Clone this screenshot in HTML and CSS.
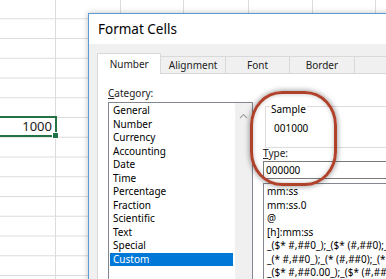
FILE: index.html
```html
<!DOCTYPE html>
<html lang="en">
<head>
    <meta charset="UTF-8">
    <meta name="viewport" content="width=device-width, initial-scale=1.0">
    <title>Format Cells</title>
    <link rel="stylesheet" href="styles.css">
</head>
<body>
    <div class="sheet">
        <div class="col col-a">
            <div class="cell selected">1000<span class="handle"></span></div>
        </div>
        <div class="col col-b"></div>
        <div class="col col-c"></div>
        <div class="col col-d"></div>
        <div class="col col-e"></div>
        <div class="col col-f"></div>
    </div>

    <div class="dialog">
        <div class="titlebar">Format Cells</div>
        <div class="dialog-body">
            <div class="tabs">
                <div class="tab active">Number</div>
                <div class="tab">Alignment</div>
                <div class="tab">Font</div>
                <div class="tab">Border</div>
                <div class="tab"></div>
            </div>
            <div class="panel">
                <div class="col-left">
                    <div class="label"><u>C</u>ategory:</div>
                    <div class="listbox category-list">
                        <div class="items">
                            <div class="item">General</div>
                            <div class="item">Number</div>
                            <div class="item">Currency</div>
                            <div class="item">Accounting</div>
                            <div class="item">Date</div>
                            <div class="item">Time</div>
                            <div class="item">Percentage</div>
                            <div class="item">Fraction</div>
                            <div class="item">Scientific</div>
                            <div class="item">Text</div>
                            <div class="item">Special</div>
                            <div class="item selected">Custom</div>
                        </div>
                        <div class="scrollbar">
                            <svg width="9" height="6" viewBox="0 0 9 6"><path d="M1 5 L4.5 1.5 L8 5" fill="none" stroke="#a6a6a6" stroke-width="1.2"/></svg>
                        </div>
                    </div>
                </div>
                <div class="col-right">
                    <fieldset class="groupbox">
                        <legend>Sample</legend>
                        <div class="sample-value">001000</div>
                    </fieldset>
                    <div class="label type-label"><u>T</u>ype:</div>
                    <div class="textbox">000000</div>
                    <div class="listbox type-list">
                        <div class="item">mm:ss</div>
                        <div class="item">mm:ss.0</div>
                        <div class="item">@</div>
                        <div class="item">[h]:mm:ss</div>
                        <div class="item">_($* #,##0_);_($* (#,##0);_($* "-"_);_(@_)</div>
                        <div class="item">_(* #,##0_);_(* (#,##0);_(* "-"_);_(@_)</div>
                        <div class="item">_($* #,##0.00_);_($* (#,##0.00);_($* "-"??_);_(@_)</div>
                    </div>
                </div>
            </div>
        </div>
    </div>

    <div class="callout"></div>
</body>
</html>
```

FILE: styles.css
```css
body {
    margin: 0;
    width: 386px;
    height: 279px;
    overflow: hidden;
    position: relative;
    background-color: #fff;
    font-family: "Noto Sans", sans-serif;
    font-size: 10px;
    color: #000;
}

/* spreadsheet behind the dialog */
.sheet {
    display: flex;
    height: 279px;
    background-image: linear-gradient(to bottom, #dcdcdc 0, #dcdcdc 1px, transparent 1px);
    background-size: 100% 19.75px;
    background-position: 0 117px;
}

.col {
    border-right: 1px solid #dcdcdc;
    flex: none;
}

.col-a { width: 55px; }
.col-b { width: 64px; }
.col-c { width: 62px; }
.col-d { width: 64px; }
.col-e { width: 63px; }
.col-f { width: 62px; }

.cell.selected {
    position: relative;
    box-sizing: border-box;
    margin: 116px 0 0 -2px;
    width: 59px;
    height: 21px;
    border: 2px solid #217346;
    padding-right: 3px;
    text-align: right;
    font-size: 13px;
    line-height: 17px;
    color: #222;
}

.handle {
    position: absolute;
    right: -4px;
    bottom: -4px;
    width: 5px;
    height: 5px;
    background-color: #217346;
    border: 1px solid #fff;
}

/* dialog */
.dialog {
    position: absolute;
    left: 88px;
    top: 13px;
    width: 330px;
    height: 300px;
    border: 1px solid #5b9bd5;
    background-color: #f0f0f0;
    box-shadow: 0 0 6px rgba(0, 0, 0, 0.25);
}

.titlebar {
    height: 30px;
    background-color: #fff;
    padding-left: 9px;
    font-size: 13.5px;
    line-height: 31px;
}

.dialog-body {
    padding: 8px 0 0 8px;
}

.tabs {
    display: flex;
    align-items: flex-end;
    height: 21px;
}

.tab {
    box-sizing: border-box;
    width: 65px;
    height: 17px;
    border: 1px solid #d9d9d9;
    border-bottom: none;
    border-left: none;
    text-align: center;
    line-height: 16px;
    color: #222;
}

.tab.active {
    height: 21px;
    background-color: #fff;
    border-left: 1px solid #d9d9d9;
    line-height: 21px;
    margin-bottom: -1px;
    position: relative;
}

.panel {
    display: flex;
    height: 240px;
    background-color: #fff;
    border: 1px solid #d9d9d9;
    padding: 12px 0 0 10px;
}

.label {
    line-height: 14px;
    margin-bottom: 2px;
    color: #222;
}

.col-left {
    width: 145px;
    flex: none;
}

.listbox {
    border: 1px solid #828790;
    background-color: #fff;
}

.category-list {
    display: flex;
    height: 200px;
}

.category-list .items {
    flex: 1;
    padding: 1px 2px 0 1px;
}

.item {
    line-height: 13.5px;
    padding-left: 3px;
    white-space: nowrap;
}

.item.selected {
    background-color: #0078d7;
    color: #fff;
}

.scrollbar {
    width: 17px;
    background-color: #f0f0f0;
    text-align: center;
    padding-top: 5px;
}

.col-right {
    margin-left: 10px;
    flex: 1;
}

.groupbox {
    margin: 11px 0 0 2px;
    padding: 0 0 0 4px;
    border: 1px solid #dcdcdc;
    border-right: none;
}

.groupbox legend {
    padding: 6px 1px 0;
    line-height: 12px;
}

.sample-value {
    padding: 6px 0 12px 4px;
    line-height: 14px;
}

.type-label {
    margin: -2px 0 0;
    line-height: 14px;
}

.textbox {
    box-sizing: border-box;
    height: 18px;
    margin-top: 1px;
    border: 1px solid #7a7a7a;
    border-right: none;
    padding-left: 2px;
    line-height: 16px;
}

.type-list {
    margin-top: 4px;
    height: 120px;
    border-right: none;
    padding-top: 1px;
    overflow: hidden;
}

.type-list .item {
    padding-left: 3px;
}

/* red circle drawn over the screenshot */
.callout {
    position: absolute;
    left: 250px;
    top: 91px;
    width: 81px;
    height: 89px;
    border: 3px solid #b0422c;
    border-radius: 32px / 34px;
    box-shadow: 0 0 5px 1px rgba(0, 0, 0, 0.35), inset 0 0 4px rgba(0, 0, 0, 0.25);
}
```
